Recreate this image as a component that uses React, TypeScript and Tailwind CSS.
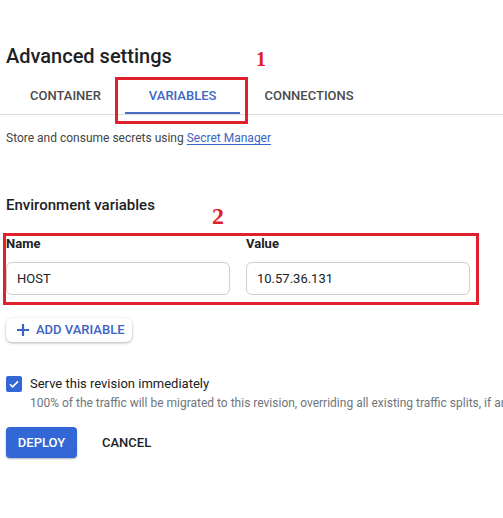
import React from "react";

const Tab: React.FC<{ label: string; active?: boolean }> = ({ label, active }) => (
  <div
    className={
      "h-[35px] px-6 pt-[1px] flex items-center text-[13px] font-medium border-b-2 " +
      (active ? "border-[#4a6fc4] text-[#3f67c4]" : "border-transparent text-[#4a4a4a]")
    }
  >
    {label}
  </div>
);

const Field: React.FC<{ label: string; value: string }> = ({ label, value }) => (
  <div className="flex flex-col w-[224px]">
    <span className="text-[13px] leading-[18px] font-bold text-[#202124]">{label}</span>
    <div className="mt-[9px] h-[33px] rounded-md border border-[#cfcfcf] px-[10px] flex items-center text-[13px] text-[#202124]">
      {value}
    </div>
  </div>
);

const App: React.FC = () => {
  return (
    <div
      className="relative w-[503px] h-[518px] bg-white overflow-hidden"
      style={{ fontFamily: "Roboto, 'Liberation Sans', sans-serif" }}
    >
      <div className="pt-[42px] pl-[6px]">
        <h2 className="text-[20px] leading-[28px] font-medium text-[#202124]">Advanced settings</h2>
      </div>

      <div className="mt-[9px] pl-[6px] flex">
        <Tab label="CONTAINER" />
        <Tab label="VARIABLES" active />
        <Tab label="CONNECTIONS" />
      </div>
      <div className="h-px bg-[#dcdcdc]" />

      <div className="pl-[6px]">
        <p className="mt-[13px] text-[12px] leading-[20px] text-[#444]">
          Store and consume secrets using{" "}
          <span className="text-[#3b64c4] underline underline-offset-2">Secret Manager</span>
        </p>

        <h3 className="mt-[46px] text-[15px] leading-[22px] font-medium text-[#202124]">
          Environment variables
        </h3>

        <div className="mt-[19px] flex gap-4">
          <Field label="Name" value="HOST" />
          <Field label="Value" value="10.57.36.131" />
        </div>

        <button className="mt-[23px] h-[24px] w-[126px] flex items-center gap-[6px] pl-[10px] rounded-md bg-white shadow-[0_1px_3px_rgba(0,0,0,0.3)] text-[13px] font-medium text-[#3b64c4]">
          <svg width="14" height="14" viewBox="0 0 14 14">
            <path d="M7 1v12M1 7h12" stroke="#3b64c4" strokeWidth="2.2" />
          </svg>
          ADD VARIABLE
        </button>

        <div className="mt-[32px] flex gap-2">
          <div className="mt-[2px] w-4 h-4 shrink-0 rounded-[2px] bg-[#3367d6] flex items-center justify-center">
            <svg width="12" height="12" viewBox="0 0 12 12">
              <path d="M2 6.2l2.6 2.6L10 3.4" fill="none" stroke="white" strokeWidth="1.6" />
            </svg>
          </div>
          <div className="flex flex-col whitespace-nowrap">
            <span className="text-[13px] leading-[20px] text-[#202124]">Serve this revision immediately</span>
            <span className="text-[12px] leading-[18px] text-[#70757a]">
              100% of the traffic will be migrated to this revision, overriding all existing traffic splits, if any
            </span>
          </div>
        </div>

        <div className="mt-[15px] flex items-center gap-[25px]">
          <button className="h-[31px] w-[71px] rounded-[4px] bg-[#3367d6] text-white text-[13px] font-medium shadow-[0_1px_2px_rgba(0,0,0,0.3)]">
            DEPLOY
          </button>
          <button className="text-[13px] font-medium text-[#202124]">CANCEL</button>
        </div>
      </div>

      {/* annotations */}
      <div className="absolute left-[115px] top-[77px] w-[133px] h-[47px] border-[3px] border-[#e0202c]" />
      <span
        className="absolute left-[256px] top-[49px] text-[20px] leading-[20px] font-bold text-[#e0202c]"
        style={{ fontFamily: "'Liberation Serif', serif" }}
      >
        1
      </span>
      <div className="absolute left-[3px] top-[233px] w-[476px] h-[72px] border-[3px] border-[#e0202c]" />
      <span
        className="absolute left-[212px] top-[204px] text-[24px] leading-[24px] font-bold text-[#e0202c]"
        style={{ fontFamily: "'Liberation Serif', serif" }}
      >
        2
      </span>
    </div>
  );
};

export default App;
